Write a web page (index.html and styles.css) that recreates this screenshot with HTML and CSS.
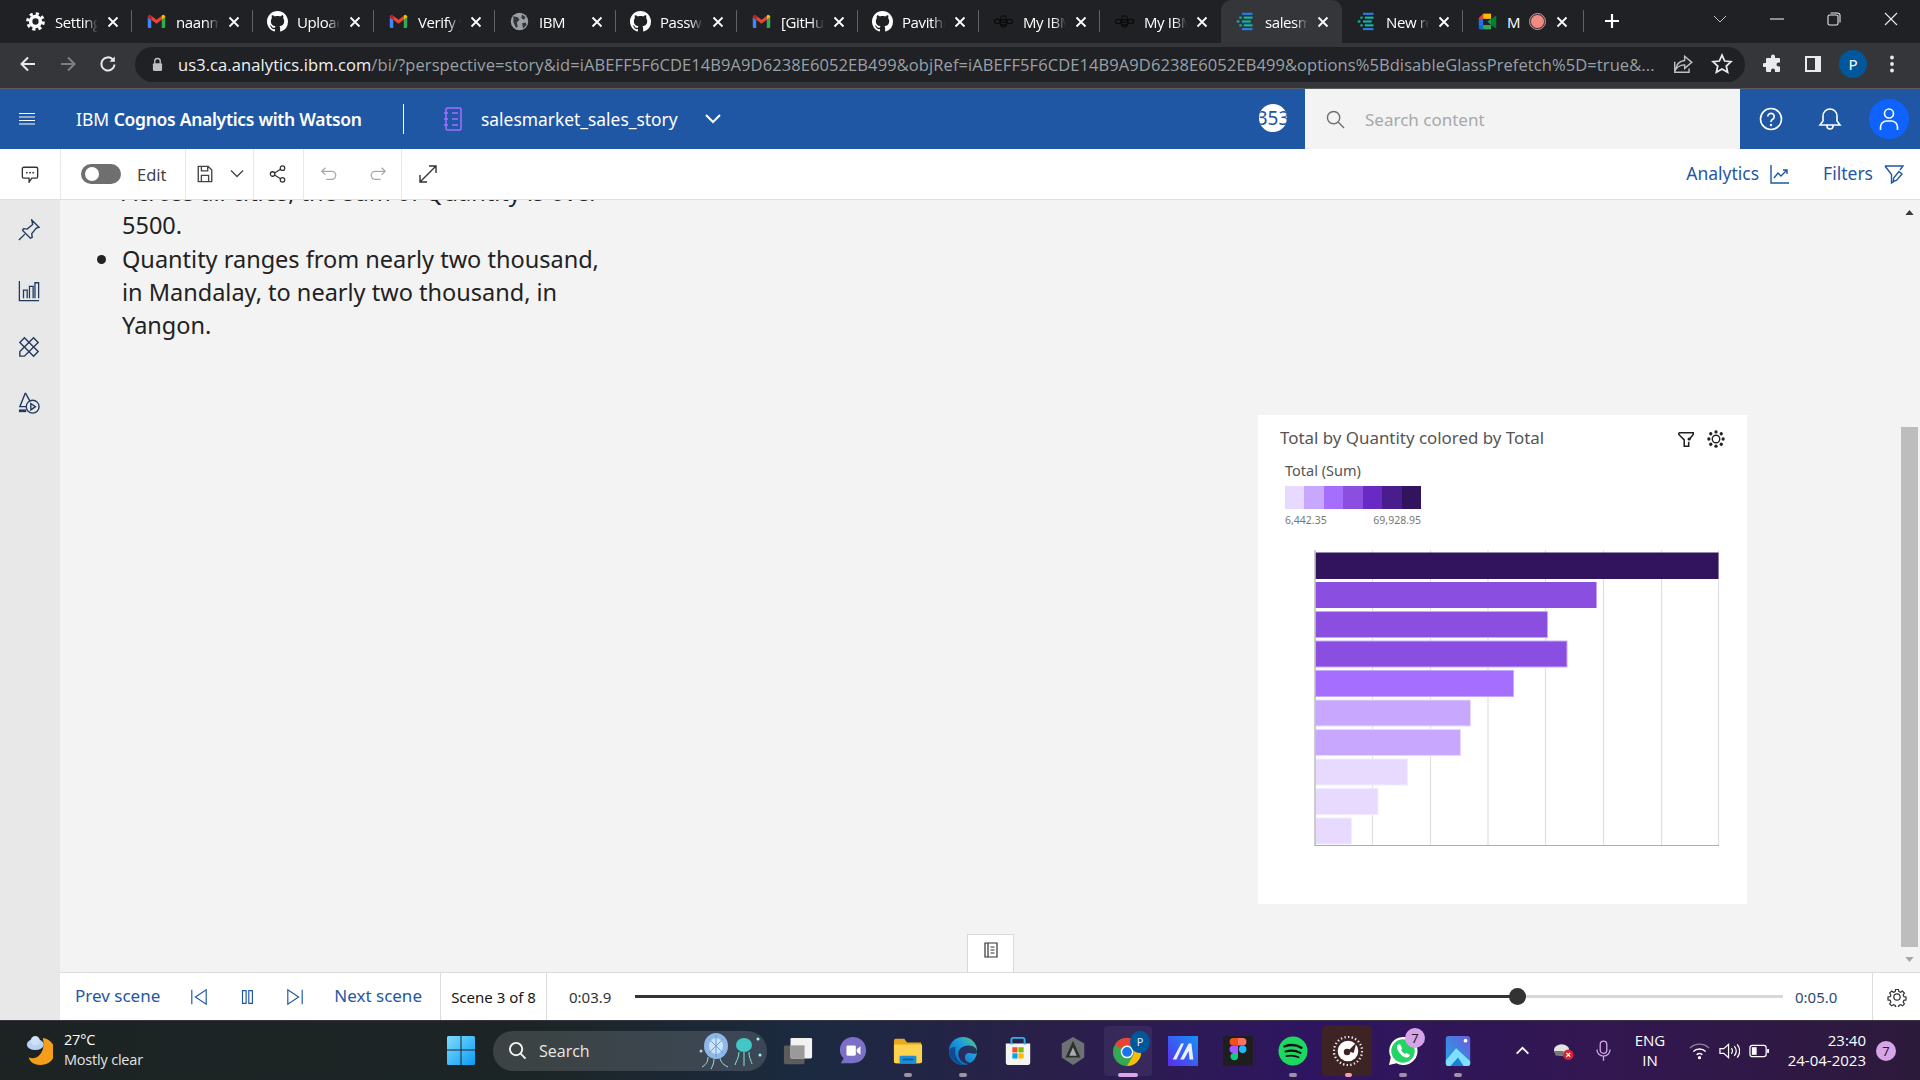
FILE: index.html
```html
<!DOCTYPE html>
<html lang="en">
<head>
<meta charset="utf-8">
<title>salesmarket_sales_story</title>
<link rel="stylesheet" href="styles.css">
</head>
<body>
<svg class="defs" width="0" height="0" aria-hidden="true">
  <symbol id="gmail" viewBox="0 0 24 24">
    <path fill="#4285f4" d="M2 7v11a1.5 1.5 0 0 0 1.5 1.5H6V10z"/>
    <path fill="#34a853" d="M22 7v11a1.5 1.5 0 0 1-1.5 1.5H18V10z"/>
    <path fill="#ea4335" d="M6 10l6 4.5 6-4.5V5.5L12 10 6 5.5z"/>
    <path fill="#c5221f" d="M6 5.5V10L2 7V6a2.2 2.2 0 0 1 4-.5z"/>
    <path fill="#fbbc04" d="M18 5.5V10l4-3V6a2.2 2.2 0 0 0-4-.5z"/>
  </symbol>
  <symbol id="github" viewBox="0 0 16 16">
    <path fill="#fff" d="M8 0C3.58 0 0 3.58 0 8c0 3.54 2.29 6.53 5.47 7.59.4.07.55-.17.55-.38 0-.19-.01-.82-.01-1.49-2.01.37-2.53-.49-2.69-.94-.09-.23-.48-.94-.82-1.13-.28-.15-.68-.52-.01-.53.63-.01 1.08.58 1.23.82.72 1.21 1.87.87 2.33.66.07-.52.28-.87.51-1.07-1.78-.2-3.64-.89-3.64-3.95 0-.87.31-1.59.82-2.15-.08-.2-.36-1.02.08-2.12 0 0 .67-.21 2.2.82.64-.18 1.32-.27 2-.27.68 0 1.36.09 2 .27 1.53-1.04 2.2-.82 2.2-.82.44 1.1.16 1.92.08 2.12.51.56.82 1.27.82 2.15 0 3.07-1.87 3.75-3.65 3.95.29.25.54.73.54 1.48 0 1.07-.01 1.93-.01 2.2 0 .21.15.46.55.38A8.013 8.013 0 0 0 16 8c0-4.42-3.58-8-8-8z"/>
  </symbol>
  <symbol id="bee" viewBox="0 0 24 24">
    <g fill="none" stroke="#0b0b0c" stroke-width="1.5">
      <ellipse cx="12" cy="12" rx="4" ry="6.5"/><path d="M8 10h8M8 13h8M8 16h8"/>
      <ellipse cx="5" cy="12" rx="3.4" ry="2.4"/><ellipse cx="19" cy="12" rx="3.4" ry="2.4"/>
    </g>
  </symbol>
  <symbol id="cognos" viewBox="0 0 24 24">
    <g fill="#2b7de9"><rect x="8" y="2" width="12" height="2.4"/><rect x="8" y="19.5" width="12" height="2.4"/></g>
    <g fill="#10b8a8"><rect x="2" y="10.8" width="3" height="2.4"/><rect x="8" y="10.8" width="10" height="2.4"/><rect x="5" y="6.4" width="2.6" height="2.4"/><rect x="10" y="6.4" width="10" height="2.4"/><rect x="5" y="15.2" width="2.6" height="2.4"/><rect x="10" y="15.2" width="10" height="2.4"/></g>
  </symbol>
  <symbol id="x" viewBox="0 0 12 12">
    <path d="M1.5 1.5l9 9M10.5 1.5l-9 9" stroke="#fff" stroke-width="1.8" fill="none"/>
  </symbol>
</svg>

<div class="tabbar">
  <div class="tab"><svg class="favicon" viewBox="0 0 24 24"><circle cx="12" cy="12" r="5.6" fill="none" stroke="#fff" stroke-width="4"/><circle cx="12" cy="12" r="9" fill="none" stroke="#fff" stroke-width="3.4" stroke-dasharray="3.6 3.47"/></svg><span class="tab-title">Settings</span><svg class="tab-x"><use href="#x"/></svg></div>
  <div class="tab"><svg class="favicon"><use href="#gmail"/></svg><span class="tab-title">naanmudhalvan</span><svg class="tab-x"><use href="#x"/></svg></div>
  <div class="tab"><svg class="favicon"><use href="#github"/></svg><span class="tab-title">Upload files</span><svg class="tab-x"><use href="#x"/></svg></div>
  <div class="tab"><svg class="favicon"><use href="#gmail"/></svg><span class="tab-title">Verify your</span><svg class="tab-x"><use href="#x"/></svg></div>
  <div class="tab"><svg class="favicon" viewBox="0 0 24 24"><circle cx="12" cy="12" r="10" fill="#9aa0a6"/><path fill="#35363a" d="M5 6l5 1 2 3-3 3 1 5-2 1-3-6zM15 4l4 3-2 3-3-2zM15 14l4-1 1 3-4 4z"/></svg><span class="tab-title">IBM</span><svg class="tab-x"><use href="#x"/></svg></div>
  <div class="tab"><svg class="favicon"><use href="#github"/></svg><span class="tab-title">Password</span><svg class="tab-x"><use href="#x"/></svg></div>
  <div class="tab"><svg class="favicon"><use href="#gmail"/></svg><span class="tab-title">[GitHub]</span><svg class="tab-x"><use href="#x"/></svg></div>
  <div class="tab"><svg class="favicon"><use href="#github"/></svg><span class="tab-title">Pavithra</span><svg class="tab-x"><use href="#x"/></svg></div>
  <div class="tab"><svg class="favicon"><use href="#bee"/></svg><span class="tab-title">My IBM</span><svg class="tab-x"><use href="#x"/></svg></div>
  <div class="tab tab-before-active"><svg class="favicon"><use href="#bee"/></svg><span class="tab-title">My IBM</span><svg class="tab-x"><use href="#x"/></svg></div>
  <div class="tab tab-active"><svg class="favicon"><use href="#cognos"/></svg><span class="tab-title">salesmarket</span><svg class="tab-x"><use href="#x"/></svg></div>
  <div class="tab"><svg class="favicon"><use href="#cognos"/></svg><span class="tab-title">New report</span><svg class="tab-x"><use href="#x"/></svg></div>
  <div class="tab tab-meet"><svg class="favicon" viewBox="0 0 24 24"><path fill="#fbbc04" d="M7 3h9v6H7z"/><path fill="#ea4335" d="M2 8l5-5v6H2z"/><path fill="#1a73e8" d="M2 9h5v7H2z"/><path fill="#1967d2" d="M2 16h5v5H4a2 2 0 0 1-2-2z"/><path fill="#34a853" d="M7 16h9v5H7z"/><path fill="#00832d" d="M16 9l6-4v15l-6-4z"/><path fill="#0f9d58" d="M12 12l4-3v7z"/></svg><span class="tab-title tab-title-short">M</span><span class="rec"></span><svg class="tab-x"><use href="#x"/></svg></div>
  <svg class="newtab" viewBox="0 0 16 16"><path d="M8 1v14M1 8h14" stroke="#fff" stroke-width="2.2"/></svg>
  <div class="win-controls">
    <svg class="w-chev" viewBox="0 0 14 8"><path d="M1 1l6 6 6-6" fill="none" stroke="#bdc1c6" stroke-width="1"/></svg>
    <svg class="w-btn" viewBox="0 0 14 14"><path d="M0 7h14" stroke="#e8eaed" stroke-width="1.1"/></svg>
    <svg class="w-btn" viewBox="0 0 14 14"><rect x="1" y="3" width="10" height="10" rx="1.5" fill="none" stroke="#e8eaed" stroke-width="1.1"/><path d="M3.5 1h7A2.5 2.5 0 0 1 13 3.500v7" fill="none" stroke="#e8eaed" stroke-width="1.1"/></svg>
    <svg class="w-btn" viewBox="0 0 14 14"><path d="M1 1l12 12M13 1L1 13" stroke="#e8eaed" stroke-width="1.1"/></svg>
  </div>
</div>

<div class="addr">
  <svg class="nav-ico" viewBox="0 0 20 20"><path d="M17 10H4M10 3.500L3.500 10l6.500 6.500" fill="none" stroke="#e8eaed" stroke-width="2"/></svg>
  <svg class="nav-ico" viewBox="0 0 20 20"><path d="M3 10h13M10 3.500l6.500 6.500-6.500 6.500" fill="none" stroke="#7b7e83" stroke-width="2"/></svg>
  <svg class="nav-ico" viewBox="0 0 20 20"><path d="M16.500 10.500a6.600 6.600 0 1 1-1.900-5.200" fill="none" stroke="#e8eaed" stroke-width="2"/><path d="M16.800 2.500v5.200h-5.200z" fill="#e8eaed"/></svg>
  <div class="omnibox">
    <svg class="lock" viewBox="0 0 12 16"><path d="M3 7V4.500a3 3 0 0 1 6 0V7" fill="none" stroke="#bdc1c6" stroke-width="1.500"/><rect x="1" y="6.500" width="10" height="8.500" rx="1.200" fill="#bdc1c6"/></svg>
    <div class="url"><span class="url-host">us3.ca.analytics.ibm.com</span>/bi/?perspective=story&amp;id=iABEFF5F6CDE14B9A9D6238E6052EB499&amp;objRef=iABEFF5F6CDE14B9A9D6238E6052EB499&amp;options%5BdisableGlassPrefetch%5D=true&amp;...</div>
    <svg class="omni-ico" viewBox="0 0 20 20"><path d="M11.500 3l6.500 5.500-6.500 5.500v-3.200c-3.500 0-6 1.200-8 4 .5-4.500 3.500-7.500 8-8z M2.500 8v9.500h13V14" fill="none" stroke="#bdc1c6" stroke-width="1.300"/></svg>
    <svg class="omni-ico" viewBox="0 0 20 20"><path d="M10 2l2.400 5.300 5.800.6-4.300 3.900 1.200 5.700L10 14.600l-5.100 2.900 1.200-5.700L1.800 7.900l5.800-.6z" fill="none" stroke="#e8eaed" stroke-width="1.600"/></svg>
  </div>
  <svg class="ext-ico" viewBox="0 0 20 20"><path fill="#e8eaed" d="M8 2.500a2 2 0 0 1 4 0V4h4a1 1 0 0 1 1 1v3.500h-1.500a2 2 0 0 0 0 4H17V17a1 1 0 0 1-1 1h-4v-1.500a2 2 0 0 0-4 0V18H4a1 1 0 0 1-1-1v-4H1.500a2 2 0 0 1 0-4H3V5a1 1 0 0 1 1-1h4z"/></svg>
  <svg class="ext-ico" viewBox="0 0 20 20"><path fill="#e8eaed" d="M2 2h16v16H2z"/><path fill="#35363a" d="M4 4h8v12H4z"/></svg>
  <div class="profile">P</div>
  <svg class="ext-ico" viewBox="0 0 20 20"><circle cx="10" cy="3.500" r="1.900" fill="#e8eaed"/><circle cx="10" cy="10" r="1.900" fill="#e8eaed"/><circle cx="10" cy="16.500" r="1.900" fill="#e8eaed"/></svg>
</div>

<header class="appbar">
  <svg class="menu-ico" viewBox="0 0 16 16"><path d="M0 2.500h16M0 6h16M0 9.500h16M0 13h16" stroke="#fff" stroke-width="1.100"/></svg>
  <div class="brand">IBM <b>Cognos Analytics with Watson</b></div>
  <div class="brand-sep"></div>
  <svg class="doc-ico" viewBox="0 0 18 24"><g fill="none" stroke="#a56eff" stroke-width="1.500"><rect x="2" y="1" width="15" height="22" rx="1.500"/><path d="M0 6h4M0 12h4M0 18h4M8 6h6M8 12h6M8 18h6"/></g></svg>
  <div class="story-name">salesmarket_sales_story</div>
  <svg class="story-chev" viewBox="0 0 16 10"><path d="M1 1l7 7 7-7" fill="none" stroke="#fff" stroke-width="2"/></svg>
  <div class="count"><span>353</span></div>
  <div class="search">
    <svg class="search-ico" viewBox="0 0 20 20"><circle cx="8" cy="8" r="6.500" fill="none" stroke="#6f6f6f" stroke-width="1.500"/><path d="M13 13l6 6" stroke="#6f6f6f" stroke-width="1.500"/></svg>
    <span class="search-ph">Search content</span>
  </div>
  <div class="app-actions">
    <svg class="app-ico" viewBox="0 0 24 24"><circle cx="12" cy="12" r="10.500" fill="none" stroke="#fff" stroke-width="1.600"/><path d="M8.800 9.500a3.200 3.200 0 1 1 4.800 2.800c-1 .6-1.600 1.200-1.600 2.700" fill="none" stroke="#fff" stroke-width="1.700"/><circle cx="12" cy="18" r="1.200" fill="#fff"/></svg>
    <svg class="app-ico" viewBox="0 0 24 24"><path d="M12 2a7 7 0 0 1 7 7v5l3 4H2l3-4V9a7 7 0 0 1 7-7zM9 18v1a3 3 0 0 0 6 0v-1" fill="none" stroke="#fff" stroke-width="1.600"/></svg>
    <div class="user"><svg viewBox="0 0 24 24"><circle cx="12" cy="6.500" r="4.500" fill="none" stroke="#fff" stroke-width="1.600"/><path d="M3.500 23v-3a6 6 0 0 1 6-6h5a6 6 0 0 1 6 6v3" fill="none" stroke="#fff" stroke-width="1.600"/></svg></div>
  </div>
</header>

<div class="toolbar">
  <div class="tb-cell tb-comment"><svg class="ico18" viewBox="0 0 20 20"><path d="M3 2.500h14a1.500 1.500 0 0 1 1.500 1.500v9a1.500 1.500 0 0 1-1.500 1.500h-5L9 19v-4.500H3A1.500 1.500 0 0 1 1.500 13V4A1.500 1.500 0 0 1 3 2.500z" fill="none" stroke="#333" stroke-width="1.500"/><circle cx="6.500" cy="8.500" r="1" fill="#333"/><circle cx="10" cy="8.500" r="1" fill="#333"/><circle cx="13.500" cy="8.500" r="1" fill="#333"/></svg></div>
  <div class="tb-cell tb-edit"><span class="toggle"><i></i></span><span class="edit-label">Edit</span></div>
  <div class="tb-cell tb-save">
    <svg class="ico18" viewBox="0 0 18 20"><path d="M1.500 1.500h11l4 4v13h-15z M5 1.500v5h7v-5 M5 18.500v-7h8v7" fill="none" stroke="#444" stroke-width="1.500"/></svg>
    <svg class="ico14" viewBox="0 0 14 10"><path d="M1 1.500l6 6 6-6" fill="none" stroke="#444" stroke-width="1.300"/></svg>
  </div>
  <div class="tb-cell tb-share"><svg class="ico18" viewBox="0 0 20 20"><g fill="none" stroke="#333" stroke-width="1.400"><circle cx="15" cy="3.500" r="2.500"/><circle cx="4" cy="10" r="2.500"/><circle cx="15" cy="16.500" r="2.500"/><path d="M6.200 8.800l6.600-4M6.200 11.200l6.600 4"/></g></svg></div>
  <div class="tb-cell tb-undo">
    <svg class="ico18" viewBox="0 0 20 20"><path d="M6 3L2 7l4 4M2 7h11a4.500 4.500 0 0 1 0 9H7" fill="none" stroke="#a8a8a8" stroke-width="1.400"/></svg>
    <svg class="ico18" viewBox="0 0 20 20"><path d="M14 3l4 4-4 4M18 7H7a4.500 4.500 0 0 0 0 9h6" fill="none" stroke="#a8a8a8" stroke-width="1.400"/></svg>
  </div>
  <div class="tb-cell tb-expand"><svg class="ico20" viewBox="0 0 20 20"><path d="M2 18L18 2M11 2h7v7M2 11v7h7" fill="none" stroke="#333" stroke-width="1.400"/></svg></div>
  <div class="tb-right">
    <span class="tb-link">Analytics</span>
    <svg class="ico20" viewBox="0 0 20 20"><path d="M1 1v18h18M4 14l4-5 3 3 6-6M13 6h4v4" fill="none" stroke="#1f57a4" stroke-width="1.400"/></svg>
    <span class="tb-link tb-filters">Filters</span>
    <svg class="ico20" viewBox="0 0 20 20"><path d="M1 2h18l-3 4M1 2l6.500 8.500V19l3-1.800M15 7.500l3 2.500-5.500 6.500-3.200.8.300-3.300z" fill="none" stroke="#1f57a4" stroke-width="1.400"/></svg>
  </div>
</div>

<div class="workspace">
  <nav class="rail">
    <svg class="rail-ico" viewBox="0 0 24 24"><path d="M15 1l8 8-3 1-5 6 .5 4-2 1-8.500-8.500 1-2 4 .5 6-5zM7.500 16.500L1 23" fill="none" stroke="#22395f" stroke-width="1.500"/></svg>
    <svg class="rail-ico rail-ico-bars" viewBox="0 0 24 24"><path d="M1.500 1v21.500H23M6 20V11h4v9M12.500 20V7h4v13M18.500 20V3h4v17" fill="none" stroke="#22395f" stroke-width="1.400"/></svg>
    <svg class="rail-ico" viewBox="0 0 24 24"><g fill="none" stroke="#22395f" stroke-width="1.500"><path d="M2 22v-5L17 2l5 5L7 22z"/><path d="M2 7l5-5 15 15-5 5z"/></g></svg>
    <svg class="rail-ico" viewBox="0 0 24 24"><g fill="none" stroke="#22395f" stroke-width="1.500"><path d="M8 1L2 16h7"/><path d="M8 1l5 9"/><circle cx="16" cy="16" r="7"/><path d="M14 12.500l5 3.500-5 3.500z"/></g><rect x="1" y="19" width="8" height="3" fill="#22395f"/></svg>
  </nav>
  <div class="stage">
    <main class="canvas">
      <ul class="narrative">
        <li>Across all cities, the sum of Quantity is over 5500.</li>
        <li>Quantity ranges from nearly two thousand, in Mandalay, to nearly two thousand, in Yangon.</li>
      </ul>
      <section class="card">
        <div class="card-head">
          <h2 class="card-title">Total by Quantity colored by Total</h2>
          <svg class="card-ico" viewBox="0 0 20 20"><path d="M2 3h16v2l-4 5M2 3v2l6 6v7h5v-5" fill="none" stroke="#222" stroke-width="1.700"/><circle cx="13.500" cy="10" r="1.800" fill="#222"/></svg>
          <svg class="card-ico" viewBox="0 0 24 24"><circle cx="12" cy="12" r="5" fill="none" stroke="#222" stroke-width="1.800"/><g fill="#222"><circle cx="12" cy="2.500" r="2.200"/><circle cx="12" cy="21.500" r="2.200"/><circle cx="2.500" cy="12" r="2.200"/><circle cx="21.500" cy="12" r="2.200"/><circle cx="5" cy="5" r="2.200"/><circle cx="19" cy="5" r="2.200"/><circle cx="5" cy="19" r="2.200"/><circle cx="19" cy="19" r="2.200"/></g></svg>
        </div>
        <div class="legend">
          <div class="legend-title">Total (Sum)</div>
          <div class="legend-scale"><i class="c1"></i><i class="c2"></i><i class="c3"></i><i class="c4"></i><i class="c5"></i><i class="c6"></i><i class="c7"></i></div>
          <div class="legend-range"><span>6,442.35</span><span>69,928.95</span></div>
        </div>
        <svg class="chart" viewBox="0 0 489 310" width="489" height="310">
          <g stroke="#e0e0e0" stroke-width="1.200">
            <path d="M114.500 0V295M172.500 0V295M230 0V295M287.500 0V295M345.500 0V295M403.500 0V295M460.500 0V295"/>
          </g>
          <g stroke-width="1">
            <rect x="57.500" y="2.500" width="403" height="26.500" fill="#31135e"/>
            <rect x="57.500" y="32" width="281" height="26" fill="#8a4ee0"/>
            <rect x="57.500" y="61.500" width="232" height="26" fill="#8a4ee0" stroke="#c8a8ff"/>
            <rect x="57.500" y="91" width="251.500" height="26" fill="#8a4ee0" stroke="#c8a8ff"/>
            <rect x="57.500" y="120.500" width="198" height="26" fill="#a56eff" stroke="#c8a8ff"/>
            <rect x="57.500" y="150" width="155" height="26" fill="#c8a7ff" stroke="#e8daff"/>
            <rect x="57.500" y="179.500" width="145" height="26" fill="#c8a7ff" stroke="#e8daff"/>
            <rect x="57.500" y="209" width="92" height="26" fill="#e8daff" stroke="#f3ecff"/>
            <rect x="57.500" y="238.500" width="62.500" height="26" fill="#e8daff" stroke="#f3ecff"/>
            <rect x="57.500" y="268" width="36" height="26" fill="#e8daff" stroke="#f3ecff"/>
          </g>
          <path d="M57 0V295.500H461" fill="none" stroke="#adadad" stroke-width="1.200"/>
        </svg>
      </section>
      <div class="scrollbar">
        <svg class="sb-arrow" viewBox="0 0 10 6"><path d="M5 0l5 6H0z" fill="#3a3a3a"/></svg>
        <div class="sb-track"><div class="sb-thumb"></div></div>
        <svg class="sb-arrow" viewBox="0 0 10 6"><path d="M0 0h10L5 6z" fill="#a8a8a8"/></svg>
      </div>
      <button class="notes-btn"><svg viewBox="0 0 14 16"><path d="M1 1h12v14H1zM4 1v14M6.500 5h4M6.500 8h4M6.500 11h4" fill="none" stroke="#333" stroke-width="1.200"/></svg></button>
    </main>
    <footer class="player">
      <div class="pl-nav">
        <span class="pl-link">Prev scene</span>
        <svg class="pl-ico" viewBox="0 0 20 20"><path d="M2 2v16M18 2v16L6 10z" fill="none" stroke="#1f57a4" stroke-width="1.300"/></svg>
        <svg class="pl-ico" viewBox="0 0 20 20"><path d="M5 3h4v14H5zM12 3h4v14h-4z" fill="none" stroke="#1f57a4" stroke-width="1.300"/></svg>
        <svg class="pl-ico" viewBox="0 0 20 20"><path d="M18 2v16M2 2v16l12-8z" fill="none" stroke="#1f57a4" stroke-width="1.300"/></svg>
        <span class="pl-link">Next scene</span>
      </div>
      <div class="pl-scene">Scene 3 of 8</div>
      <div class="pl-time">
        <span class="t-now">0:03.9</span>
        <div class="slider"><div class="slider-fill"></div><div class="slider-knob"></div></div>
        <span class="t-end">0:05.0</span>
      </div>
      <div class="pl-gear"><svg viewBox="0 0 24 24"><path d="M10 1.500h4l.6 3 2.300 1 2.600-1.700 2.800 2.800-1.700 2.600 1 2.300 3 .5v4l-3 .6-1 2.300 1.700 2.600-2.800 2.800-2.600-1.700-2.300 1-.6 3h-4l-.5-3-2.400-1-2.500 1.700-2.900-2.800 1.700-2.600-1-2.300-3-.6v-4l3-.5 1-2.300-1.700-2.600 2.900-2.800 2.500 1.700 2.400-1z" transform="translate(1.700 1.700) scale(.86)" fill="none" stroke="#333" stroke-width="1.700"/><circle cx="12" cy="12" r="3.800" fill="none" stroke="#333" stroke-width="1.500"/></svg></div>
    </footer>
  </div>
</div>

<div class="taskbar">
  <div class="weather">
    <svg class="weather-ico" viewBox="0 0 30 36"><path d="M19 4a14 14 0 0 1-3 29C9 33 5 29 4 25c9 4 19-6 15-21z" fill="#f59e1b"/><ellipse cx="11" cy="11" rx="9" ry="6" fill="#b9d1f2"/><circle cx="11" cy="7" r="5" fill="#cfe0f7"/></svg>
    <div class="weather-text"><span>27°C</span><span class="weather-sub">Mostly clear</span></div>
  </div>
  <svg class="start" viewBox="0 0 28 29"><defs><linearGradient id="win" x1="0" y1="0" x2="1" y2="1"><stop offset="0" stop-color="#7fdcff"/><stop offset="1" stop-color="#0a9cf5"/></linearGradient></defs><path fill="url(#win)" d="M1.500 0H13.500V13.500H0V1.500A1.500 1.500 0 0 1 1.500 0zM14.500 0H26.500A1.500 1.500 0 0 1 28 1.500V13.500H14.500zM0 14.500H13.500V29H1.500A1.500 1.500 0 0 1 0 27.500zM14.500 14.500H28V27.500A1.500 1.500 0 0 1 26.500 29H14.500z"/></svg>
  <div class="tb-search">
    <svg class="tb-search-ico" viewBox="0 0 20 20"><circle cx="8.500" cy="8.500" r="6.500" fill="none" stroke="#f2f2f2" stroke-width="2"/><path d="M13 13l5.500 5.500" stroke="#f2f2f2" stroke-width="2"/></svg>
    <span class="tb-search-text">Search</span>
    <svg class="jelly" viewBox="0 0 64 40"><circle cx="2" cy="20" r="1.500" fill="#bcd"/><ellipse cx="17" cy="15" rx="12" ry="13" fill="#8fb7e8"/><ellipse cx="17" cy="15" rx="7" ry="8" fill="#c9e4f7"/><path d="M17 4v22M10 8l14 14M24 8L10 22" stroke="#6f9ad6" stroke-width="1"/><path d="M9 26c0 6-3 8-6 10M15 28c0 5-2 8-3 10M21 27c1 5 4 7 8 9" fill="none" stroke="#9fe3e3" stroke-width="1"/><ellipse cx="45" cy="14" rx="8" ry="7" fill="#43c7c4"/><path d="M40 21c0 6-3 9-4 13M45 21v14M50 21c0 6 2 8 3 12" fill="none" stroke="#7ee7e0" stroke-width="1"/><circle cx="59" cy="8" r="1.500" fill="#9fd"/><circle cx="61" cy="24" r="1.500" fill="#9fd"/></svg>
  </div>
  <div class="apps">
    <div class="app"><svg viewBox="0 0 32 32"><rect x="1" y="10" width="22" height="20" rx="1.500" fill="#5c5c5c"/><rect x="8" y="2" width="23" height="22" rx="1.500" fill="#f2f2f2"/><rect x="8" y="10" width="15" height="14" fill="#9a9a9a"/></svg></div>
    <div class="app"><svg viewBox="0 0 32 32"><path d="M16 1c8 0 14 6 14 14s-6 14-14 14H3l3-5C3 21 2 18 2 15 2 7 8 1 16 1z" fill="#7b6fc7"/><rect x="9" y="10" width="10" height="11" rx="1.500" fill="#fff"/><path d="M20 14l4-3v9l-4-3z" fill="#fff"/></svg></div>
    <div class="app has-dot"><svg viewBox="0 0 32 32"><path d="M1 5a2 2 0 0 1 2-2h9l3 4h15v20a2 2 0 0 1-2 2H3a2 2 0 0 1-2-2z" fill="#e8a91c"/><path d="M1 9h30v18a2 2 0 0 1-2 2H3a2 2 0 0 1-2-2z" fill="#fcd24e"/><rect x="7" y="21" width="18" height="8" rx="1.500" fill="#1b8fd8"/><rect x="10" y="24" width="12" height="2" fill="#0d5f9e"/></svg></div>
    <div class="app has-dot"><svg viewBox="0 0 32 32"><defs><linearGradient id="edge" x1="0" y1="1" x2="1" y2="0"><stop offset="0" stop-color="#0c59a4"/><stop offset=".6" stop-color="#1b9de2"/><stop offset="1" stop-color="#5ad06a"/></linearGradient></defs><circle cx="16" cy="16" r="15" fill="url(#edge)"/><path d="M31 17c0-4-4-7-9-7-7 0-11 4-11 9 0 6 5 11 11 11 2 0 4-.5 5-1.500-6 1-9-2-9-6 0-3 3-5 6-4 3 .5 7 1 7-1.500z" fill="#2a1f4a" opacity=".85"/><path d="M8 12C6 20 10 28 18 31 9 31 2 24 1 16c1-3 4-5 7-4z" fill="#0c4a94"/></svg></div>
    <div class="app"><svg viewBox="0 0 32 32"><path d="M3 8h26v20a3 3 0 0 1-3 3H6a3 3 0 0 1-3-3z" fill="#f4f4f4"/><path d="M9 9V4a2 2 0 0 1 2-2h10a2 2 0 0 1 2 2v5" fill="none" stroke="#2bb3e8" stroke-width="2"/><rect x="10" y="12" width="5.500" height="5.500" fill="#f25022"/><rect x="16.500" y="12" width="5.500" height="5.500" fill="#7fba00"/><rect x="10" y="18.500" width="5.500" height="5.500" fill="#00a4ef"/><rect x="16.500" y="18.500" width="5.500" height="5.500" fill="#ffb900"/></svg></div>
    <div class="app"><svg viewBox="0 0 32 32"><path d="M16 1l12 7v15l-12 8-12-8V8z" fill="#6e7173"/><path d="M16 5l-8 18h16z" fill="#2d2f31"/><path d="M16 12l-4 9h8z" fill="#a9acad"/></svg></div>
    <div class="app app-chrome has-pill"><svg viewBox="0 0 32 32"><circle cx="15" cy="17" r="15" fill="#34a853"/><path d="M15 2a15 15 0 0 1 13 7.500H15a7.500 7.500 0 0 0-6.500 3.800L2 9.500A15 15 0 0 1 15 2z" fill="#ea4335"/><path d="M28 9.500A15 15 0 0 1 15 32l6.500-11.200A7.500 7.500 0 0 0 21.500 13z" fill="#fbbc04"/><circle cx="15" cy="17" r="6" fill="#1a73e8" stroke="#fff" stroke-width="1.500"/></svg><span class="chrome-badge">P</span></div>
    <div class="app"><svg viewBox="0 0 32 32"><defs><linearGradient id="mm" x1="0" y1="1" x2="1" y2="0"><stop offset="0" stop-color="#5b2bf0"/><stop offset="1" stop-color="#1593f5"/></linearGradient></defs><rect width="32" height="32" fill="url(#mm)"/><path d="M5 25L14 8h3L9 25zM13 25L22 8h3l2 17h-4l-1-9-5 9z" fill="#e8f0ff"/></svg></div>
    <div class="app"><svg viewBox="0 0 32 32"><rect width="32" height="32" fill="#1e1e1e"/><path d="M11 2h5v8h-5a4 4 0 0 1 0-8z" fill="#f24e1e"/><path d="M16 2h5a4 4 0 0 1 0 8h-5z" fill="#ff7262"/><path d="M11 10h5v8h-5a4 4 0 0 1 0-8z" fill="#a259ff"/><circle cx="21" cy="14" r="4" fill="#1abcfe"/><path d="M11 18h5v4a4 4 0 1 1-5-4z" fill="#0acf83"/></svg></div>
    <div class="app has-dot"><svg viewBox="0 0 32 32"><circle cx="16" cy="16" r="15.500" fill="#1ed760"/><g fill="none" stroke="#111" stroke-linecap="round"><path d="M7 11c6-2 13-1.500 18 1.500" stroke-width="2.600"/><path d="M8 16.500c5-1.500 11-1 16 1.500" stroke-width="2.200"/><path d="M9 21.500c4-1 9-.7 13 1.200" stroke-width="1.800"/></g></svg></div>
    <div class="app app-gauge has-pink"><svg viewBox="0 0 32 32"><circle cx="16" cy="16" r="15" fill="none" stroke="#e8e8e8" stroke-width="2.400" stroke-dasharray="1.500 2.400"/><circle cx="16" cy="16" r="11" fill="#fff"/><path d="M16 16l9-9-3 11z" fill="#3d2323"/><circle cx="15" cy="17" r="3.500" fill="#3d2323"/></svg></div>
    <div class="app has-dot app-wa"><svg viewBox="0 0 32 32"><path d="M16 1a15 15 0 1 1-7 28l-8 2 2-8A15 15 0 0 1 16 1z" fill="#fff"/><circle cx="16" cy="16" r="12.500" fill="#25d366"/><path d="M11 9c-2 1-2 4 0 7 2 4 6 7 9 7 2 0 4-2 3-3l-3-2-2 1c-2-1-3-2-4-4l1-2-2-4z" fill="#fff"/></svg><span class="wa-badge">7</span></div>
    <div class="app has-dot"><svg viewBox="0 0 32 32"><defs><linearGradient id="ph" x1="0" y1="1" x2="1" y2="0"><stop offset="0" stop-color="#1fa6ea"/><stop offset="1" stop-color="#6a5cd8"/></linearGradient></defs><rect x="3" y="0" width="26" height="32" rx="3" fill="url(#ph)"/><path d="M3 26L14 13l15 14v2a3 3 0 0 1-3 3H6a3 3 0 0 1-3-3z" fill="#7de0ff"/><path d="M8 32l8-9 6 9z" fill="#1d7fd6"/><circle cx="24" cy="5" r="2" fill="#fff"/></svg></div>
  </div>
  <div class="tray">
    <svg class="tray-chev" viewBox="0 0 16 10"><path d="M1.500 8.500L8 2l6.500 6.500" fill="none" stroke="#fff" stroke-width="2"/></svg>
    <svg class="tray-cloud" viewBox="0 0 22 20"><ellipse cx="9" cy="9" rx="8" ry="6" fill="#e4e4e4"/><path d="M1 10h10v5H3z" fill="#777"/><circle cx="16" cy="14" r="5.500" fill="#d92332"/><path d="M14 12l4 4M18 12l-4 4" stroke="#fff" stroke-width="1.300"/></svg>
    <svg class="tray-mic" viewBox="0 0 16 22"><rect x="4.500" y="1" width="7" height="13" rx="3.500" fill="none" stroke="#d8a4e8" stroke-width="1.400"/><path d="M1 10a7 7 0 0 0 14 0M8 17v5" fill="none" stroke="#d8a4e8" stroke-width="1.400"/></svg>
    <div class="lang"><span>ENG</span><span>IN</span></div>
    <svg class="tray-ico" viewBox="0 0 22 18"><path d="M1 6a14 14 0 0 1 20 0" fill="none" stroke="#8d8594" stroke-width="1.400"/><path d="M4.500 9.500a9.500 9.500 0 0 1 13 0M8 13a4.500 4.500 0 0 1 6 0" fill="none" stroke="#fff" stroke-width="1.500"/><circle cx="11" cy="16" r="1.700" fill="#fff"/></svg>
    <svg class="tray-ico" viewBox="0 0 22 18"><path d="M1 6.500h4L10 2v14L5 11.500H1z" fill="none" stroke="#fff" stroke-width="1.300"/><path d="M13 6c1.500 2 1.500 4 0 6M16 4c2.500 3 2.500 7 0 10M19 2c3.500 4 3.500 10 0 14" fill="none" stroke="#fff" stroke-width="1.300"/></svg>
    <svg class="tray-ico" viewBox="0 0 22 18"><rect x="1" y="3" width="17" height="12" rx="2.500" fill="none" stroke="#fff" stroke-width="1.300"/><rect x="3" y="5" width="5" height="8" fill="#fff"/><rect x="19" y="7" width="2" height="4" fill="#fff"/></svg>
    <div class="clock"><span>23:40</span><span>24-04-2023</span></div>
    <div class="notif">7</div>
  </div>
</div>
</body>
</html>
```
FILE: styles.css
```css
* { box-sizing: border-box; }
html, body { margin: 0; padding: 0; }
body {
  width: 1920px; height: 1080px; overflow: hidden;
  display: flex; flex-direction: column;
  font-family: "Noto Sans", "Liberation Sans", sans-serif;
  background: #f3f3f3;
}
.defs { position: absolute; }

/* browser tabs */
.tabbar {
  height: 43px; flex: none; display: flex; align-items: flex-start;
  padding-left: 11px; background: #202124; color: #fff; position: relative;
}
.tab {
  width: 121px; height: 43px; flex: none; display: flex; align-items: center;
  padding: 0 0 0 14px; position: relative; font-size: 15px;
}
.tab::after {
  content: ""; position: absolute; right: 0; top: 10px; height: 22px; width: 1px; background: #5f6368;
}
.tab-before-active::after, .tab-active::after { display: none; }
.tab-active { background: #35363a; border-radius: 10px 10px 0 0; height: 43px; }
.favicon { width: 21px; height: 21px; flex: none; }
.tab-title {
  width: 43px; margin: 0 1px 0 9px; white-space: nowrap; overflow: hidden;
  font-family: "Open Sans", sans-serif; letter-spacing: -.4px; color: #fff;
  -webkit-mask-image: linear-gradient(90deg, #000 70%, transparent);
  mask-image: linear-gradient(90deg, #000 70%, transparent);
}
.tab-title-short { width: 14px; -webkit-mask-image: none; mask-image: none; }
.rec { width: 15px; height: 15px; border-radius: 50%; background: #f28b82; border: 1.500px solid #35363a; outline: 1px solid #f28b82; margin-left: 8px; margin-right: 6px; flex: none; }
.tab-x { width: 12px; height: 12px; margin-left: 8px; flex: none; }
.tab-meet .tab-x { margin-left: 5px; }
.newtab { width: 16px; height: 16px; margin: 13px 0 0 20px; flex: none; }
.win-controls { margin-left: auto; display: flex; align-items: center; height: 38px; }
.w-chev { width: 14px; height: 8px; margin-right: 43px; }
.w-btn { width: 14px; height: 14px; margin-right: 43px; }
.w-btn:last-child { margin-right: 22px; }

/* address row */
.addr {
  height: 46px; flex: none; display: flex; align-items: center; background: #35363a;
  padding: 0 0 3px 18px; border-bottom: 1px solid #5a5b5f;
}
.nav-ico { width: 20px; height: 20px; margin-right: 20px; flex: none; }
.nav-ico:nth-child(3) { margin-right: 17px; }
.omnibox {
  width: 1610px; height: 35px; border-radius: 18px; background: #202124; flex: none;
  display: flex; align-items: center; padding: 0 13px 0 17px;
}
.lock { width: 11px; height: 15px; flex: none; }
.url {
  margin: 1px 0 0 15px; width: 1478px; flex: none; white-space: nowrap; overflow: hidden;
  font-family: "Open Sans", sans-serif; font-size: 16.500px; color: #9aa0a6; letter-spacing: .09px;
}
.url-host { color: #f1f3f4; }
.omni-ico { width: 22px; height: 22px; flex: none; margin-left: 16px; }
.omni-ico + .omni-ico { margin-left: 17px; }
.ext-ico { width: 20px; height: 20px; flex: none; margin-left: 18px; }
.ext-ico + .ext-ico { margin-left: 20px; }
.profile {
  width: 28px; height: 28px; border-radius: 50%; background: #01579b; color: #fff; font-size: 15px;
  display: flex; align-items: center; justify-content: center; margin-left: 16px; flex: none;
}
.profile + .ext-ico { margin-left: 15px; }

/* app header */
.appbar {
  height: 60px; flex: none; background: #1f57a4; color: #fff; display: flex; align-items: center;
  padding-left: 19px;
}
.menu-ico { width: 16px; height: 16px; flex: none; }
.brand { margin-left: 41px; font-size: 17.500px; white-space: nowrap; width: 285px; }
.brand b { font-weight: 600; letter-spacing: -.3px; }
.brand-sep { width: 1px; height: 30px; background: #fff; margin-left: 42px; }
.doc-ico { width: 18px; height: 24px; margin-left: 40px; flex: none; }
.story-name { margin-left: 19px; font-size: 17.400px; width: 201px; white-space: nowrap; }
.story-chev { width: 16px; height: 10px; margin-left: 23px; flex: none; }
.count {
  width: 28px; height: 28px; border-radius: 50%; background: #fff; color: #1f57a4; overflow: hidden;
  margin-left: 538px; font-size: 19px; display: flex; justify-content: center; align-items: center; flex: none;
  margin-top: -2px;
}
.search {
  width: 435px; height: 60px; margin-left: 18px; background: #f3f3f3; display: flex; align-items: center;
  padding-left: 21px; flex: none;
}
.search-ico { width: 19px; height: 19px; flex: none; }
.search-ph { margin-left: 20px; color: #a8a8a8; font-size: 17px; }
.app-actions { display: flex; align-items: center; flex: 1; padding-left: 19px; }
.app-ico { width: 24px; height: 24px; flex: none; margin-right: 35px; }
.user {
  width: 40px; height: 40px; border-radius: 50%; background: #0f62fe; margin-left: -8px;
  display: flex; align-items: center; justify-content: center; flex: none;
}
.user svg { width: 24px; height: 26px; }

/* toolbar */
.toolbar {
  height: 51px; flex: none; background: #fff; display: flex; align-items: stretch;
  border-bottom: 1px solid #e0e0e0;
}
.tb-cell { display: flex; align-items: center; border-right: 1px solid #e8e8e8; flex: none; }
.ico18 { width: 18px; height: 18px; flex: none; }
.ico14 { width: 14px; height: 10px; flex: none; }
.ico20 { width: 20px; height: 20px; flex: none; }
.tb-comment { width: 61px; padding-left: 21px; }
.tb-edit { width: 125px; padding-left: 20px; }
.toggle { width: 40px; height: 20px; border-radius: 10px; background: #6f6f6f; position: relative; flex: none; }
.toggle i { position: absolute; left: 4px; top: 3px; width: 14px; height: 14px; border-radius: 50%; background: #fff; }
.edit-label { margin-left: 16px; font-size: 16.500px; color: #444; }
.tb-save { width: 68px; padding-left: 10px; gap: 16px; }
.tb-share { width: 50px; padding-left: 15px; }
.tb-undo { width: 98px; padding-left: 16px; gap: 31px; }
.tb-expand { width: 0; border: 0; padding-left: 16px; }
.tb-right { margin-left: auto; display: flex; align-items: center; padding-right: 16px; }
.tb-link { color: #1f57a4; font-size: 17.500px; margin: -2px 11px 0 0; }
.tb-filters { margin-left: 33px; }

/* workspace */
.workspace { flex: 1; display: flex; min-height: 0; }
.rail { width: 60px; flex: none; background: #e8e8e8; display: flex; flex-direction: column; align-items: center; padding: 19px 3px 0 0; gap: 34px; }
.rail-ico { width: 22px; height: 22px; flex: none; }
.rail-ico-bars { margin-top: 5px; }
.stage { flex: 1; display: flex; flex-direction: column; min-width: 0; }
.canvas { flex: 1; position: relative; overflow: hidden; background: #f3f3f3; }
.narrative {
  margin: -25px 0 0; padding: 0 0 0 62px; width: 552px;
  font-size: 23.500px; line-height: 33px; color: #222;
}
.narrative li::marker { font-size: 26px; }

/* card */
.card {
  position: absolute; left: 1198px; top: 215px; width: 489px; height: 489px; background: #fff;
  display: flex; flex-direction: column;
}
.card-head { display: flex; align-items: center; padding: 10px 22px 0 22px; height: 34px; }
.card-title { margin: 0; flex: 1; font-weight: 400; font-size: 16.900px; color: #555; }
.card-ico { width: 18px; height: 18px; margin: 3px 0 0 12px; flex: none; }
.legend { padding: 13px 0 0 27px; width: 163px; }
.legend-title { font-size: 14.500px; line-height: 17px; color: #555; }
.legend-scale { display: flex; height: 23px; margin-top: 7px; width: 136px; }
.legend-scale i { flex: 1; }
.c1 { background: #e8daff; } .c2 { background: #c8a7ff; } .c3 { background: #a56eff; }
.c4 { background: #8a4ee0; } .c5 { background: #6929c4; } .c6 { background: #491d8b; } .c7 { background: #31135e; }
.legend-range { display: flex; justify-content: space-between; width: 136px; margin-top: 4px; font-size: 10.500px; color: #777; }
.chart { display: block; margin-top: 23px; flex: none; }

/* scrollbar + notes */
.scrollbar { position: absolute; right: 2px; top: 0; bottom: 0; width: 17px; display: flex; flex-direction: column; align-items: center; }
.sb-arrow { width: 9px; height: 5px; flex: none; margin: 10px 0; }
.sb-track { flex: 1; width: 100%; padding-top: 202px; }
.sb-thumb { height: 100%; background: #bdbdbd; }
.notes-btn {
  position: absolute; left: 907px; bottom: 0; width: 47px; height: 38px; background: #fff;
  border: 1px solid #d8d8d8; border-bottom: 0; padding: 0; display: flex; align-items: center; justify-content: center;
}
.notes-btn svg { width: 14px; height: 16px; margin-top: -7px; }

/* player */
.player { height: 48px; flex: none; background: #fff; border-top: 1px solid #dcdcdc; display: flex; align-items: stretch; }
.pl-nav { display: flex; align-items: center; width: 381px; padding-left: 15px; border-right: 1px solid #dcdcdc; flex: none; }
.pl-link { color: #1f57a4; font-size: 17px; white-space: nowrap; margin-top: -2px; }
.pl-ico { width: 18px; height: 18px; flex: none; margin-left: 30px; }
.pl-ico + .pl-ico { margin-left: 30px; }
.pl-ico + .pl-link { margin-left: 30px; }
.pl-scene { width: 106px; flex: none; border-right: 1px solid #dcdcdc; display: flex; align-items: center; justify-content: center; font-size: 15px; color: #161616; }
.pl-time { flex: 1; display: flex; align-items: center; padding-left: 22px; font-size: 15px; color: #333; }
.t-now { width: 66px; flex: none; }
.t-end { margin-left: 12px; color: #2f4a70; }
.slider { width: 1148px; height: 3px; background: #d8d8d8; position: relative; flex: none; }
.slider-fill { position: absolute; left: 0; top: 0; bottom: 0; width: 882px; background: #333; }
.slider-knob { position: absolute; left: 874px; top: -7px; width: 17px; height: 17px; border-radius: 50%; background: #333; }
.pl-gear { width: 48px; flex: none; border-left: 1px solid #dcdcdc; display: flex; align-items: center; justify-content: center; }
.pl-gear svg { width: 20px; height: 20px; }

/* taskbar */
.taskbar {
  height: 60px; flex: none; display: flex; align-items: center; color: #fff; position: relative;
  background: linear-gradient(90deg, #1d2323 0, #1c2526 28%, #1b2a40 42%, #2a1f4a 55%, #2f1560 68%, #32174f 85%, #2c1a3a 100%);
  border-top: 1px solid #3a3540;
}
.weather { display: flex; align-items: center; width: 447px; padding-left: 25px; flex: none; }
.weather-ico { width: 28px; height: 34px; flex: none; }
.weather-text { display: flex; flex-direction: column; margin-left: 11px; font-size: 14.500px; line-height: 20px; font-family: "Open Sans", sans-serif; letter-spacing: -.2px; margin-top: -2px; }
.weather-sub { color: #e3e3e3; }
.start { width: 28px; height: 29px; flex: none; }
.tb-search {
  width: 274px; height: 40px; margin-left: 18px; border-radius: 20px; flex: none;
  background: rgba(255,255,255,.14); display: flex; align-items: center; padding-left: 15px;
}
.tb-search-ico { width: 19px; height: 19px; flex: none; }
.tb-search-text { margin-left: 12px; font-size: 16px; color: #e8e8e8; font-family: "Open Sans", sans-serif; flex: 1; }
.jelly { width: 64px; height: 40px; margin-right: 4px; flex: none; }
.apps { display: flex; margin-left: 3px; flex: none; }
.app { width: 55px; height: 60px; display: flex; align-items: center; justify-content: center; position: relative; flex: none; }
.app svg { width: 30px; height: 30px; }
.has-dot::after, .has-pill::after, .has-pink::after { content: ""; position: absolute; top: 52px; height: 4px; border-radius: 2px; left: 50%; }
.has-dot::after { width: 8px; margin-left: -4px; background: #9a94a6; }
.has-pill::after { width: 20px; margin-left: -10px; background: #dba5ea; }
.has-pink::after { width: 7px; margin-left: -3px; background: #f2a0a6; }
.app-chrome::before { content: ""; position: absolute; left: 4px; top: 5px; width: 48px; height: 50px; background: rgba(255,255,255,.06); border-radius: 4px; }
.app-chrome svg { position: relative; }
.chrome-badge { position: absolute; left: 30px; top: 10px; width: 20px; height: 22px; border-radius: 50%; background: #01579b; color: #e3eef9; font-size: 11px; display: flex; align-items: center; justify-content: center; }
.app-gauge::before { content: ""; position: absolute; left: 2px; top: 5px; width: 50px; height: 50px; background: #3d2323; border-radius: 4px; }
.app-gauge svg { position: relative; }
.wa-badge { position: absolute; left: 30px; top: 7px; width: 20px; height: 20px; border-radius: 50%; background: #d8a4e8; color: #222; font-size: 13px; display: flex; align-items: center; justify-content: center; }
.tray { display: flex; align-items: center; flex: 1; padding-left: 30px; }
.tray-chev { width: 15px; height: 9px; flex: none; }
.tray-cloud { width: 21px; height: 20px; margin-left: 23px; flex: none; }
.tray-mic { width: 15px; height: 21px; margin-left: 22px; flex: none; }
.lang { width: 40px; margin: -2px 0 0 19px; display: flex; flex-direction: column; align-items: center; font-size: 15px; line-height: 20px; font-family: "Open Sans", sans-serif; flex: none; }
.tray-ico { width: 21px; height: 18px; margin-left: 9px; flex: none; }
.lang + .tray-ico { margin-left: 19px; }
.clock { margin: -2px 0 0 8px; width: 88px; display: flex; flex-direction: column; align-items: flex-end; font-size: 15px; line-height: 20px; font-family: "Open Sans", sans-serif; flex: none; white-space: nowrap; }
.notif { width: 20px; height: 20px; border-radius: 50%; background: #d8a4e8; color: #222; font-size: 13px; margin-left: 10px; display: flex; align-items: center; justify-content: center; flex: none; }
```
